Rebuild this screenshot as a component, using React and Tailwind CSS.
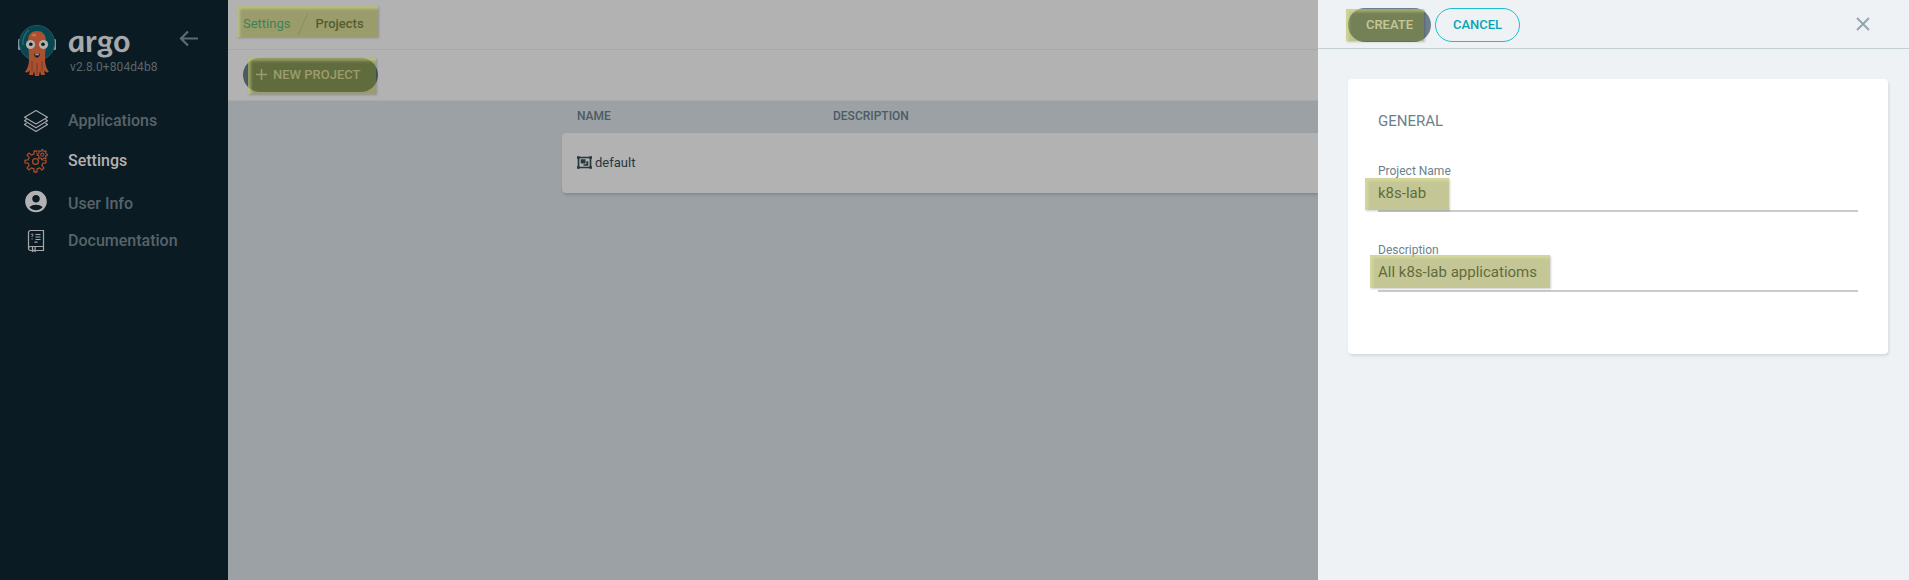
import React from "react";
import { MdAccountCircle } from "react-icons/md";

const HL =
  "absolute pointer-events-none bg-[rgba(125,131,20,0.45)] shadow-[inset_3px_3px_3px_rgba(240,250,170,0.35),1px_1px_2px_rgba(0,0,0,0.2)]";

function Octopus() {
  return (
    <svg width="40" height="52" viewBox="0 0 40 52" className="shrink-0">
      <rect x="1" y="15" width="3" height="11" rx="1" fill="#7e97a3" />
      <rect x="36" y="15" width="3" height="11" rx="1" fill="#7e97a3" />
      <circle cx="20" cy="19" r="17.6" fill="#07464f" stroke="#2b5361" strokeWidth="1" />
      <path d="M6 21C5 15 8 9 12 6" fill="none" stroke="#2d6770" strokeWidth="1.4" />
      <path d="M11 17C11 10 15 7 20 7s9 3 9 10c0 6-1 12-1 18 0 5 1 9 4 13-2 1-4 0-5-2l1 5h-4l-1-4-1 5h-4l-1-5-1 4h-4l1-5c-1 2-3 3-5 2 3-4 4-8 4-13 0-6-1-12-1-18z" fill="#a8502f" />
      <path d="M15 37v10M20 39v11M25 37v10" stroke="#76351f" strokeWidth=".9" />
      <ellipse cx="17" cy="11" rx="2.5" ry="1.6" fill="#bd7150" />
      <circle cx="13.5" cy="20.5" r="4.6" fill="#afb0b0" />
      <circle cx="26.5" cy="20.5" r="4.6" fill="#afb0b0" />
      <circle cx="13.8" cy="20.3" r="1.8" fill="#10181c" />
      <circle cx="26" cy="20.3" r="1.8" fill="#10181c" />
      <path d="M17 29.500q3 1.500 6 0q-.5 4-3 4t-3-4z" fill="#171b1d" />
      <path d="M18 30.200h4l-.4 1h-3.200z" fill="#c8c8c8" />
    </svg>
  );
}

function LayersIcon() {
  return (
    <svg width="26" height="24" viewBox="0 0 26 24" fill="none" stroke="#a4a8aa" strokeWidth="1.200" strokeLinejoin="round">
      <path d="M13 1.500L24.500 8.200 13 15 1.500 8.200z" />
      <path d="M3.500 10.300L1.500 11.700 13 18.800l11.500-7.100-2-1.400" />
      <path d="M3.500 14L1.500 15.400 13 22.500l11.500-7.100-2-1.400" />
    </svg>
  );
}

function gear(cx, cy, inner, outer, teeth) {
  const step = (Math.PI * 2) / teeth;
  const at = (r, a) => `${(cx + r * Math.cos(a)).toFixed(2)} ${(cy + r * Math.sin(a)).toFixed(2)}`;
  let d = "";
  for (let i = 0; i < teeth; i++) {
    const a = i * step;
    d += `${i ? "L" : "M"}${at(inner, a - step * 0.27)}L${at(outer, a - step * 0.17)}L${at(outer, a + step * 0.17)}L${at(inner, a + step * 0.27)}`;
  }
  return d + "z";
}

function GearsIcon() {
  return (
    <svg width="24" height="24" viewBox="0 0 24 24" fill="none" stroke="#a84c2e" strokeWidth="1.300" strokeLinejoin="round">
      <path d={gear(11.5, 12.5, 7.6, 10.6, 8)} />
      <circle cx="11.500" cy="12.500" r="2.900" />
      <circle cx="18.300" cy="5.700" r="5.800" fill="#0b1b23" stroke="none" />
      <g strokeWidth="1.100">
        <path d={gear(18.3, 5.7, 3.8, 5.1, 8)} />
        <circle cx="18.300" cy="5.700" r="1.600" />
      </g>
    </svg>
  );
}

function BookIcon() {
  return (
    <svg width="18" height="24" viewBox="0 0 18 24" fill="none" stroke="#a4a8aa" strokeWidth="1.200">
      <path d="M3.500 1.500h13v20H3.500a2 2 0 0 1-2-2v-16a2 2 0 0 1 2-2z" />
      <path d="M1.800 18.500q.5-1 2-1h12.700M5.500 17.500v4.800l1.300-1 1.300 1v-4.800" />
      <path d="M8.500 5.500h5M8.500 8h5M8.500 10.500h5M7.500 13.200h3" />
      <path d="M4 5.800q.4-.9 1.300-.8.900.2.800 1.100l-1 1.200v.9M5.100 9.500v1" strokeWidth="1" />
    </svg>
  );
}

function ProjectIcon() {
  return (
    <svg width="15" height="13" viewBox="0 0 15 13" className="mr-[3px] shrink-0 -mt-px" fill="#263840">
      <path d="M1.500 1.500h12v10h-12z" fill="none" stroke="#263840" strokeWidth="1.700" />
      <path d="M0 .3h2.700v2.400H0zM12.300 .3H15v2.400h-2.700zM0 10.300h2.700v2.400H0zM12.300 10.300H15v2.400h-2.700z" />
      <path d="M3.700 3.300h4.800v4.200H3.700zM9.300 5.300h2v4.500H6.500V8.300h2.800z" />
    </svg>
  );
}

function NavItem({ icon, label, active, className }) {
  return (
    <div className={`flex items-center ${className}`}>
      <span className="ml-[23px] flex w-[26px] shrink-0 justify-center">{icon}</span>
      <span className={`ml-[19px] text-[16px] leading-6 font-medium ${active ? "text-[#b2b2b2]" : "text-[#57636a]"}`}>{label}</span>
    </div>
  );
}

function Sidebar() {
  return (
    <aside className="flex h-full w-[228px] shrink-0 flex-col bg-[#0b1b23]">
      <div className="flex h-[90px] pl-[17px] pt-6">
        <Octopus />
        <div className="ml-[13px] w-[100px] pt-1">
          <div className="h-[30px] w-fit origin-bottom-left [transform:translateY(-1px)_scaleX(1.07)_skewX(8deg)] font-[Lato] text-[31px] leading-[27px] font-bold text-[#a6a8a9] italic">argo</div>
          <div className="mt-px text-[12px] leading-4 tracking-[0.08px] text-[#5b666c]">v2.8.0+804d4b8</div>
        </div>
        <svg width="20" height="18" viewBox="0 0 20 18" className="ml-[9px] mt-[6px]" fill="none" stroke="#596b77" strokeWidth="2.200">
          <path d="M9 1.500L2 8.500l7 7M2 8.500h17" />
        </svg>
      </div>
      <nav className="flex flex-col">
        <NavItem className="mt-[19px] h-6" icon={<LayersIcon />} label="Applications" />
        <NavItem className="mt-[16px] h-6" icon={<GearsIcon />} label="Settings" active />
        <NavItem className="mt-[19px] h-6" icon={<MdAccountCircle size={27} color="#b2b2b2" className="-mt-[6px]" />} label="User Info" />
        <NavItem className="mt-[13px] h-6" icon={<BookIcon />} label="Documentation" />
      </nav>
    </aside>
  );
}

function Main() {
  return (
    <main className="flex h-full min-w-0 flex-1 flex-col overflow-hidden bg-[#9ba1a5]">
      <div className="flex h-[50px] shrink-0 border-b border-[#a6a9aa] bg-[#b2b2b2] pl-[9px] pt-[6px]">
        <div className="relative flex h-[31px] w-[141px] items-center pl-[6px] pt-[4px] text-[13px]">
          <span className="text-[#008392]">Settings</span>
          <svg width="12" height="24" viewBox="0 0 12 24" className="ml-[7px] mr-[6px]" stroke="#8d989c" strokeWidth="1">
            <path d="M1 23L11 1" />
          </svg>
          <span className="font-medium text-[#363c4a]">Projects</span>
          <div className={`${HL} inset-0`} />
        </div>
      </div>
      <div className="flex h-[51px] shrink-0 border-b border-[#a6a9aa] bg-[#b2b2b2] pl-[15px] pt-2">
        <button className="relative flex h-[34px] w-[135px] items-center rounded-full bg-[#4c5961] pl-[13px] text-[13px] font-medium text-[#b2b2b2]">
          <svg width="11" height="11" viewBox="0 0 11 11" className="mr-[6px] -mt-[2px]" stroke="#b2b2b2" strokeWidth="1.500">
            <path d="M5.500 0v11M0 5.500h11" />
          </svg>
          <span>NEW PROJECT</span>
          <div className={`${HL} top-0 left-[5px] h-[36px] w-[128px]`} />
        </button>
      </div>
      <div className="ml-[334px] flex h-8 shrink-0 items-center pb-[2px] pl-[15px] text-[12px] font-medium text-[#4c5b64]">
        <span className="w-64">NAME</span>
        <span>DESCRIPTION</span>
      </div>
      <div className="ml-[334px] flex h-[60px] shrink-0 items-center rounded-l bg-[#b2b2b2] pl-[15px] text-[13px] text-[#263840] shadow-[1px_2px_3px_rgba(0,0,0,0.15)]">
        <ProjectIcon />
        <span>default</span>
      </div>
    </main>
  );
}

function Field({ label, value, mark, className }) {
  return (
    <div className={`relative flex flex-col border-b-2 border-[#cacaca] ${className}`}>
      <label className="text-[12px] leading-[14px] text-[#6d7f8b]">{label}</label>
      <span className="mt-[4px] text-[15px] leading-[22px] text-[#495763]">{value}</span>
      <div className={`${HL} ${mark}`} />
    </div>
  );
}

function Panel() {
  return (
    <section className="flex h-full w-[591px] shrink-0 flex-col bg-[#eef2f5]">
      <header className="flex h-[49px] shrink-0 border-b border-[#c3cfd3] pl-[30px] pt-2 text-[13px] font-medium">
        <button className="relative flex h-[34px] w-[83px] items-center justify-center rounded-full bg-[#6d7f8b] text-white">
          CREATE
          <div className={`${HL} top-px -left-[2px] h-8 w-[78px]`} />
        </button>
        <button className="ml-1 h-[34px] w-[85px] rounded-full border border-[#1fbdd0] text-[#0aa3b5]">CANCEL</button>
        <svg width="14" height="14" viewBox="0 0 14 14" className="mt-[9px] ml-auto mr-[39px]" stroke="#8fa4b1" strokeWidth="1.800">
          <path d="M1 1l12 12M13 1L1 13" />
        </svg>
      </header>
      <div className="mt-[30px] ml-[30px] flex h-[275px] w-[540px] flex-col rounded bg-white px-[30px] shadow-[1px_2px_3px_rgba(0,0,0,0.1)]">
        <h2 className="mt-[30px] text-[15px] leading-6 text-[#6d7f8b]">GENERAL</h2>
        <Field className="mt-[31px] h-[48px]" label="Project Name" value="k8s-lab" mark="-left-[13px] top-[14px] h-8 w-[84px]" />
        <Field className="mt-[31px] h-[49px]" label="Description" value="All k8s-lab applicatioms" mark="-left-[8px] top-[12px] h-[33px] w-[180px]" />
      </div>
    </section>
  );
}

export default function App() {
  return (
    <div className="flex h-[580px] w-[1909px] overflow-hidden font-[Roboto,sans-serif]">
      <Sidebar />
      <Main />
      <Panel />
    </div>
  );
}
